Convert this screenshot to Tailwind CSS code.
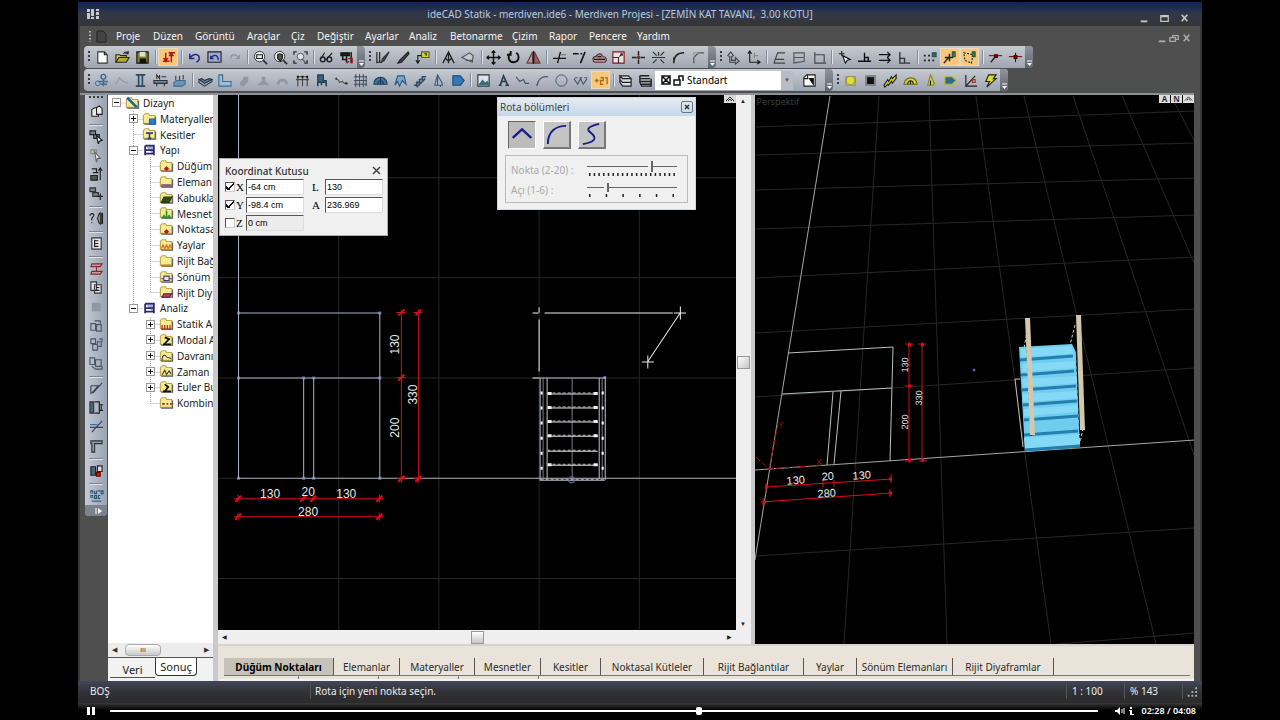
<!DOCTYPE html>
<html lang="tr">
  <head>
    <meta charset="UTF-8" />
    <meta name="viewport" content="width=device-width, initial-scale=1.0" />
    <title>ideCAD Statik - merdiven.ide6</title>
    <script src="https://cdn.jsdelivr.net/npm/@tailwindcss/browser@4"></script>
  </head>
  <body class="bg-black h-screen overflow-hidden flex flex-col px-[78px] text-[11px] leading-4 font-['Noto_Sans',sans-serif]">
    <!-- Title bar -->
    <header class="mt-[2px] h-6 shrink-0 flex items-center pl-2 pr-3 bg-linear-to-b from-[#10205a] via-[#333847] to-[#353535] text-[#b4cbe0]">
      <svg class="w-4 h-4" viewBox="0 0 16 16" fill="#c8c8c8"><path d="M1 3h3v3H1zM1 7h3v6H1zM5 3h3v7H5zM5 11h3v2H5zM10 3h3v2h-3zM10 6h3v3h-3zM10 10h3v3h-3z" /></svg>
      <h1 class="flex-1 text-center whitespace-pre text-[10px]">ideCAD Statik - merdiven.ide6 - Merdiven Projesi - [ZEMİN KAT TAVANI,  3.00 KOTU]</h1>
      <div class="flex gap-2 pt-2 text-[#c4c4c4]" data-tools="winmin winmax winclose"></div>
    </header>

    <div class="flex-1 min-h-0 flex flex-col bg-[#4f4f4f] border-x-2 border-[#3a3a3a]">
      <!-- Menu bar -->
      <nav class="h-5 shrink-0 flex items-center pl-2 pr-2 text-[10px] text-[#f4f4f4]">
        <svg class="w-5 h-4 mr-2" viewBox="0 0 20 16"><path d="M2 3v11" stroke="#ddd" stroke-width="1.5" stroke-dasharray="1.5 2" /><path d="M9 3h6l3 3v8H9z" fill="#444" stroke="#222" /></svg>
        <button class="w-[37px] text-left">Proje</button>
        <button class="w-[42px] text-left">Düzen</button>
        <button class="w-[52px] text-left">Görüntü</button>
        <button class="w-[44px] text-left">Araçlar</button>
        <button class="w-[26px] text-left">Çiz</button>
        <button class="w-[48px] text-left">Değiştir</button>
        <button class="w-[44px] text-left">Ayarlar</button>
        <button class="w-[41px] text-left">Analiz</button>
        <button class="w-[62px] text-left">Betonarme</button>
        <button class="w-[37px] text-left">Çizim</button>
        <button class="w-[40px] text-left">Rapor</button>
        <button class="w-[48px] text-left">Pencere</button>
        <button class="text-left">Yardım</button>
        <div class="ml-auto flex -mb-1 text-[#a8a8a8]" data-tools="winmin winrestore winclose"></div>
      </nav>

      <!-- Toolbars -->
      <div class="h-[22px] shrink-0 flex pl-1">
        <div class="w-[281px] flex items-center rounded-l bg-linear-to-b from-[#c6cad1] to-[#a0a6b1]" data-tools="grip new open save | !levels | undo undobox redo | zoomwin zoompan zoomall | glasses tools end"></div>
        <div class="w-[351px] flex items-center bg-linear-to-b from-[#c6cad1] to-[#a0a6b1]" data-tools="grip knife pen callout | mirrorv eraser | move rotate mirror | trim extend stamp scale cross explode fillet chamfer end"></div>
        <div class="w-[317px] flex items-center rounded-r bg-linear-to-b from-[#c6cad1] to-[#a0a6b1]" data-tools="grip ucs axes | planea planeb planec | snapcur perp parallel ortho | gridsnap !nodesnap !boxsnap | near mid end"></div>
      </div>
      <div class="h-[22px] mt-px shrink-0 flex pl-1">
        <div class="w-[571px] flex items-center rounded-l bg-linear-to-b from-[#c6cad1] to-[#a0a6b1]" data-tools="grip node ghosta column beam load | slab lshape ghostb ghostc ghostd frame chair spring mesh dome curtain stairs bell tag | image text spline arc circle zigzag !numbers | layers layersb"></div>
        <div class="w-[178px] flex items-center bg-linear-to-b from-[#c6cad1] to-[#a0a6b1]">
          <div class="w-[138px] h-[19px] flex items-center bg-white text-black pl-1">
            <svg class="w-7 h-4 shrink-0" viewBox="0 0 28 16" fill="none" stroke="#111" stroke-width="1.5"><path d="M3 4h8v8H3zM4 5l6 6M10 5l-6 6M15 8h6v5h-6zM20 8V4h4v5" /></svg>
            <select aria-label="Katman" class="flex-1 min-w-0 appearance-none bg-transparent text-[10px] h-full"><option>Standart</option></select>
            <span class="w-3 h-full bg-[#b8bcc6] text-[#555] text-[6px] flex items-center justify-center">▼</span>
          </div>
          <div class="flex-1 flex items-center h-full" data-tools="layerpick end"></div>
        </div>
        <div class="w-[175px] flex items-center rounded-r bg-linear-to-b from-[#c6cad1] to-[#a0a6b1]" data-tools="grip circyel dark beamyel arch tri tagb graph bolt end"></div>
      </div>

      <!-- Work area -->
      <main class="relative mt-[2px] flex-1 min-h-0 flex border-t-2 border-[#8d9098] mr-[6px]">
        <div class="w-7 shrink-0 pl-[5px]">
          <div class="w-[22px] flex flex-col items-center rounded-b bg-linear-to-r from-[#c3c9d4] to-[#9aa3b3]" data-tools="gripv copy - sel selb move3 selc - query - listbox - steel paste ghoste rota rotb rotc - slope wall cross2 corner - shapes - auto endv"></div>
        </div>

        <aside class="w-[105px] shrink-0 flex flex-col bg-[#f2f2f2]">
          <div class="flex-1 bg-white overflow-hidden relative">
            <svg class="absolute top-0 left-0 w-[106px] h-[316px]" viewBox="0 0 106 316" fill="none" stroke="#aaa" stroke-dasharray="1 1"><path d="M8.500 8h10M25.500 16v198M25.500 24.500h10M25.500 39.500h10M25.500 55.500h10M25.500 213.500h10M42.500 62v136M42.500 222v87M42.500 71.500h9M42.500 87.500h9M42.500 102.500h9M42.500 118.500h9M42.500 134.500h9M42.500 150.500h9M42.500 166.500h9M42.500 182.500h9M42.500 197.500h9M42.500 229.500h9M42.500 245.500h9M42.500 261.500h9M42.500 277.500h9M42.500 292.500h9M42.500 308.500h9" /></svg>
            <ul id="tree" class="relative h-[316px] grid auto-rows-fr text-[10px] text-[#222] whitespace-nowrap"></ul>
          </div>
          <div class="h-[14px] flex items-center bg-[#ececec] text-[7px] text-[#333] px-1">
            <button>◀</button>
            <button class="ml-2 w-9 h-3 border border-[#aaa] rounded-sm bg-linear-to-b from-white to-[#c9c9c9] leading-2">ııı</button>
            <button class="ml-auto">▶</button>
          </div>
          <div class="h-6 flex items-start border-t border-[#555] text-[11px] text-[#222] pl-[2px]">
            <button class="w-[45px] h-5 pt-1 border-b border-[#555]">Veri</button>
            <button class="w-[42px] h-[18px] border border-t-0 border-[#333] bg-white rounded-b-sm">Sonuç</button>
          </div>
        </aside>

        <section class="flex-1 min-w-0 flex flex-col border-l-5 border-[#c9c9cb]">
          <div class="flex-1 min-h-0 grid grid-cols-[536fr_439fr] bg-[#c9c9cb]">
            <!-- Plan view -->
            <div class="grid grid-cols-[1fr_15px] grid-rows-[1fr_14px] bg-[#efefef] mr-1 min-h-0">
              <div class="relative bg-black min-h-0 overflow-hidden">
                <svg class="w-full h-full block" viewBox="218 96 518 534" preserveAspectRatio="xMinYMin slice" fill="none">
                  <path stroke="#262626" d="M338.500 95v534M438.500 95v534M538.500 95v534M638.500 95v534M218 178.500h518M218 278.500h518M218 378.500h518M218 578.500h518M218 478.500h20" />
                  <path stroke="#a9b6bf" d="M238.500 95v384M238 313.500h141M238 378.500h141M379.500 313v166M303.500 378v100M313.500 378v100M238 478.500h498" />
                  <path stroke="#8f9de0" stroke-width="3" stroke-linecap="square" d="M238.500 313.500h0M379.500 313.500h0M238.500 378.500h0M379.500 378.500h0M303.500 378.500h0M313.500 378.500h0M238.500 478.500h0M303.500 478.500h0M313.500 478.500h0M379.500 478.500h0" stroke-opacity=".7" />
                  <g stroke="#d80f1a">
                    <path d="M401 310v173M418 310v173M234 499h149M234 517h149M396 313h9M396 378h9M396 479h9M413 313h9M413 479h9M238 495v8M303 496v6M313 496v6M379 495v8M238 513v8M379 513v8" />
                    <path stroke-width="2" d="M398 316l6-6M398 381l6-6M398 482l6-6M415 316l6-6M415 482l6-6M235 502l6-6M300 502l6-6M310 502l6-6M376 502l6-6M235 520l6-6M376 520l6-6" />
                  </g>
                  <g class="font-['Liberation_Sans',sans-serif] text-[12px]" fill="#e8e8e8" text-anchor="middle">
                    <text x="270" y="498">130</text><text x="308" y="496">20</text><text x="346" y="498">130</text><text x="308" y="516">280</text>
                    <text transform="translate(399 345) rotate(-90)">130</text><text transform="translate(399 428) rotate(-90)">200</text><text transform="translate(417 395) rotate(-90)">330</text>
                  </g>
                  <path stroke="#eee" d="M538.500 320v52M544 313.500h128M679 314l-32 48M532 313.500h6M538.500 308v5M532 378.500h7M673 313.500h12M679.500 307v13M641 362.500h12M647 356v13" />
                  <path stroke="#b9c0cc" d="M539.500 378v102M546.500 378v101M598.500 378v101M604.500 378v102M539 378.500h65M539 480.500h65" />
                  <path stroke="#777b85" d="M571.500 378v102M601.500 378v101M542.500 378v101" />
                  <path stroke="#fff" stroke-width="2" stroke-dasharray="3 12" d="M541 392v88M602 392v88" />
                  <path stroke="#ddd" d="M547 394.500h50M547 408.500h50M547 422.500h50M547 436.500h50M547 451.500h50M547 465.500h50" />
                  <path stroke="#bbb" stroke-dasharray="3 2" d="M547 393.500h50M547 407.500h50M547 421.500h50M547 435.500h50M547 450.500h50M547 464.500h50M540 479.500h64" />
                  <path stroke="#eee" stroke-width="3" d="M547 394h4M547 408h4M547 422h4M547 436h4M547 465h4M593 394h4M593 408h4M593 422h4M593 436h4M593 465h4" />
                  <circle cx="571" cy="480" r="3" stroke="#666b9a" />
                  <circle cx="604" cy="378" r="1.500" fill="#8f9de0" />
                </svg>
                <button class="absolute top-0 right-0 w-3 h-2 bg-[#d8d8d8]" aria-label="Büyüt"><svg viewBox="0 0 12 8"><path d="M2 6l4-4 4 4M4 6l2-2 2 2" stroke="#333" fill="none" /></svg></button>
              </div>
              <div class="flex flex-col items-center text-[6px] text-[#222]">
                <button class="leading-3">▲</button>
                <button class="mt-[249px] w-[13px] h-[13px] border border-[#999] bg-linear-to-br from-white to-[#c6c6c6]" aria-label="Dikey kaydır"></button>
                <button class="mt-auto leading-3">▼</button>
              </div>
              <div class="flex items-center text-[6px] text-[#222] px-1">
                <button>◀</button>
                <button class="ml-[244px] w-[13px] h-[13px] border border-[#999] bg-linear-to-b from-white to-[#c6c6c6]" aria-label="Yatay kaydır"></button>
                <button class="ml-auto">▶</button>
              </div>
            </div>
            <!-- Perspective view -->
            <div class="relative bg-black min-h-0 overflow-hidden">
              <svg class="w-full h-full block" viewBox="755 95 440 549" preserveAspectRatio="xMinYMin slice" fill="none">
                <path stroke="#262626" d="M879 96L844 644M929 96L947 644M976 96L1051 644M1024 96L1156 644M1073 96L1194 455M1122 96L1194 263M1171 96L1194 140M756 333L1195 309M756 397L1195 368M756 556L1195 528M1057 644L1195 633M756 278L1195 257M756 229L1195 215M756 190L1195 178M756 155L1195 143M756 127L1195 111" />
                <path stroke="#a5a5a5" d="M830 96L755 560M755 470L1195 440" />
                <path stroke="#b5c2bd" d="M788 353L893 347L890 461M782 394L892 388M833 392L827 465M841 391L834 464M1020 379h-5l8 68" />
                <path stroke="#a01018" d="M756 457L770 470M768 469l55-4M769 469l9-45" stroke-dasharray="6 2" />
                <path stroke="#d80f1a" d="M909 342v121M922 342v120M766 487L892 479M761 502L892 493M905 344h8M905 386h8M905 461h8M918 344h8M919 461h8M766 483v8M823 480v7M834 480v7M891 474v9M763 498v8M890 489v8" />
                <path stroke="#d80f1a" stroke-width="3" d="M908 345h3M908 386h3M908 460h3M921 345h3M921 460h3M765 487h3M889 479h3M763 502h3M889 493h3" />
                <g class="font-['Liberation_Sans',sans-serif] text-[11px]" fill="#e8e8e8" text-anchor="middle">
                  <text transform="translate(796 484) rotate(-4)">130</text><text transform="translate(828 480) rotate(-4)">20</text><text transform="translate(862 479) rotate(-4)">130</text><text transform="translate(827 497) rotate(-4)">280</text>
                </g>
                <g class="font-['Liberation_Sans',sans-serif] text-[9px]" fill="#e8e8e8" text-anchor="middle">
                  <text transform="translate(908 365) rotate(-88)">130</text><text transform="translate(908 422) rotate(-88)">200</text><text transform="translate(922 398) rotate(-88)">330</text>
                </g>
                <g class="font-['Liberation_Sans',sans-serif] text-[9px]" fill="#8c1018"><text x="816" y="465">X</text><text x="778" y="428">Y</text></g>
                <circle cx="974" cy="370" r="1.500" fill="#4a5fc0" />
                <!-- Staircase -->
                <path stroke="#d8cdb4" stroke-dasharray="3 2" d="M1028 325l-4 24M1075 325l-5 20M1083 428l-3 15" />
                <path fill="#6fcdf0" d="M1019 347L1072 344L1076 352L1080 447L1025 452z" />
                <path fill="#84d9f6" d="M1021 349L1071 346L1074 354L1021 357zM1022 364L1075 361V368L1022 372zM1023 379L1077 376V383L1023 387zM1023 394L1077 391V398L1023 402zM1024 409L1078 405V412L1024 416zM1024 438L1080 434V444L1025 449z" />
                <path stroke="#247fae" stroke-width="3" d="M1020 360L1073 356M1021 375L1074 371M1022 390L1076 386M1023 405L1077 401M1024 420L1078 416M1024 435L1078 431M1025 450L1080 446" />
                <path stroke="#111" stroke-dasharray="3 3" d="M1027 350L1031 436M1076 345L1080 440" />
                <path fill="#d3c7ad" d="M1025 318h5l5 117h-5zM1076 315h5l4 115h-5z" />
              </svg>
              <span class="absolute top-px left-[2px] text-[9px] leading-3 text-[#3c3c3c]">Perspektif</span>
              <div class="absolute top-0 right-0 flex gap-px text-[8px] leading-2 font-bold text-[#333]">
                <button class="w-[11px] h-2 bg-[#dedede]">A</button><button class="w-[11px] h-2 bg-[#dedede]">N</button>
                <button class="w-[11px] h-2 bg-[#dedede]" aria-label="Büyüt"><svg viewBox="0 0 12 8"><path d="M2 6l4-4 4 4M4 6l2-2 2 2" stroke="#333" fill="none" /></svg></button>
              </div>
            </div>
          </div>
          <!-- Element tabs -->
          <div class="h-[37px] shrink-0 bg-[#e9e3da] border-t-2 border-[#d6d3cf] flex flex-col pt-3">
            <div class="flex h-[18px] ml-[6px] mr-1 border-b border-[#777] text-[10px] text-[#2c2c2c] whitespace-nowrap">
              <button class="w-[110px] bg-[#c5c2b7] border-r border-[#555] font-bold text-black">Düğüm Noktaları</button>
              <button class="w-[66px] border-r border-[#555]">Elemanlar</button>
              <button class="w-[75px] border-r border-[#555]">Materyaller</button>
              <button class="w-[66px] border-r border-[#555]">Mesnetler</button>
              <button class="w-[60px] border-r border-[#555]">Kesitler</button>
              <button class="w-[103px] border-r border-[#555]">Noktasal Kütleler</button>
              <button class="w-[100px] border-r border-[#555]">Rijit Bağlantılar</button>
              <button class="w-[53px] border-r border-[#555]">Yaylar</button>
              <button class="w-[96px] border-r border-[#555]">Sönüm Elemanları</button>
              <button class="w-[101px] border-r border-[#555]">Rijit Diyaframlar</button>
            </div>
            <div class="flex-1 flex ml-[1px] border-b-2 border-[#f4f2ee]">
              <span class="w-20 border-r border-[#777]"></span><span class="w-20 border-r border-[#777]"></span><span class="w-20 border-r border-[#777]"></span><span class="w-20 border-r border-[#777]"></span>
            </div>
          </div>
        </section>

        <!-- Coordinate box -->
        <div class="absolute left-[139px] top-[63px] w-[169px] h-[78px] bg-[#f0f0f0] border border-[#aaa] pl-[5px] pr-1 text-black">
          <div class="flex items-center justify-between h-[19px] pt-1 text-[10px] font-medium text-[#333]">
            <h2>Koordinat Kutusu</h2>
            <button aria-label="Kapat"><svg class="w-3 h-3" viewBox="0 0 12 12"><path d="M2 2l7 7M9 2l-7 7" stroke="#444" stroke-width="1.500" /></svg></button>
          </div>
          <div id="coords" class="grid grid-cols-[11px_10px_58px_21px_58px] items-center auto-rows-[18px] font-['Liberation_Serif',serif] text-[11px]"></div>
        </div>

        <!-- Route sections -->
        <div class="absolute left-[417px] top-[2px] w-[199px] h-[113px] bg-[#f0f0f0] border border-[#d0d6dd]">
          <div class="flex items-center justify-between h-[18px] px-[2px] bg-linear-to-b from-[#e6ebf1] to-[#c5d8ea] text-[10px] text-[#444]">
            <h2>Rota bölümleri</h2>
            <button aria-label="Kapat" class="w-3 h-3 border border-[#66748c] rounded-xs"><svg viewBox="0 0 10 10"><path d="M3 3l4 4M7 3l-4 4" stroke="#333" stroke-width="1.500" /></svg></button>
          </div>
          <div class="flex gap-[7px] pl-[10px] pt-[5px]">
            <button class="w-7 h-7 bg-[#bcbcbc] border border-t-[#666] border-l-[#666] border-white" aria-label="Doğru"><svg viewBox="0 0 28 28"><path d="M4 17l10-9 10 9" stroke="#1a1a8c" stroke-width="2.500" fill="none" /></svg></button>
            <button class="w-7 h-7 bg-[#c4c4c4] border border-b-2 border-r-2 border-t-white border-l-white border-[#777]" aria-label="Yay"><svg viewBox="0 0 26 26"><path d="M4 23C4 10 12 4 23 4" stroke="#1a1a8c" stroke-width="2" fill="none" /></svg></button>
            <button class="w-7 h-7 bg-[#c4c4c4] border border-b-2 border-r-2 border-t-white border-l-white border-[#777]" aria-label="Eğri"><svg viewBox="0 0 26 26"><path d="M21 2C8 5 8 8 12 11C20 17 16 21 4 23" stroke="#1a1a8c" stroke-width="2" fill="none" /></svg></button>
          </div>
          <div class="mt-[6px] mx-[7px] h-12 border border-[#bbb] pl-[5px] pr-[10px] text-[10px] text-[#a8a8a8]">
            <div class="flex justify-between h-[21px] pt-1">
              <label for="pts" class="pt-[2px]">Nokta (2-20) :</label>
              <div class="w-[90px] flex flex-col">
                <input id="pts" type="range" min="2" max="20" value="15" class="w-full h-[13px] appearance-none bg-transparent [&::-webkit-slider-runnable-track]:h-px [&::-webkit-slider-runnable-track]:bg-[#666] [&::-webkit-slider-thumb]:appearance-none [&::-webkit-slider-thumb]:w-[5px] [&::-webkit-slider-thumb]:h-[11px] [&::-webkit-slider-thumb]:-mt-[5px] [&::-webkit-slider-thumb]:bg-[#f0f0f0] [&::-webkit-slider-thumb]:border-r-2 [&::-webkit-slider-thumb]:border-[#666]" />
                <svg class="w-[90px] h-[3px]" viewBox="0 0 90 3"><path d="M2 1.500h88" stroke="#222" stroke-width="3" stroke-dasharray="1.500 3.190" /></svg>
              </div>
            </div>
            <div class="flex justify-between h-[21px] pt-1">
              <label for="ang" class="pt-px">Açı (1-6) :</label>
              <div class="w-[90px] flex flex-col">
                <input id="ang" type="range" min="1" max="6" value="2" class="w-full h-[13px] appearance-none bg-transparent [&::-webkit-slider-runnable-track]:h-px [&::-webkit-slider-runnable-track]:bg-[#666] [&::-webkit-slider-thumb]:appearance-none [&::-webkit-slider-thumb]:w-[5px] [&::-webkit-slider-thumb]:h-[9px] [&::-webkit-slider-thumb]:-mt-[4px] [&::-webkit-slider-thumb]:bg-[#f0f0f0] [&::-webkit-slider-thumb]:border-r-2 [&::-webkit-slider-thumb]:border-[#666]" />
                <svg class="w-[90px] h-[3px]" viewBox="0 0 90 3"><path d="M2 1.500h88" stroke="#222" stroke-width="3" stroke-dasharray="1.500 15.200" /></svg>
              </div>
            </div>
          </div>
        </div>
      </main>
    </div>

    <!-- Status bar -->
    <footer class="h-[22px] shrink-0 flex items-center pl-3 pr-1 pb-[2px] bg-linear-to-b from-[#41465a] via-[#323237] to-[#2b2b2b] text-[10px] text-[#ececec]">
      <span class="w-[220px]">BOŞ</span>
      <span class="flex-1 border-l border-[#555] pl-1">Rota için yeni nokta seçin.</span>
      <span class="w-[58px] border-l border-[#555] pl-[5px]">1 : 100</span>
      <span class="w-[58px] border-l border-[#555] pl-[5px]">% 143</span>
      <svg class="w-4 h-4 border-l border-[#555]" viewBox="0 0 16 16" fill="#aaa"><path d="M13 4h2v2h-2zM9 8h2v2H9zM13 8h2v2h-2zM5 12h2v2H5zM9 12h2v2H9zM13 12h2v2h-2z" /></svg>
    </footer>

    <!-- Player -->
    <div class="h-[17px] shrink-0 flex items-center pl-2 pr-[6px] pb-px bg-linear-to-b from-[#3a3a3a] to-black to-60% text-white text-[9px] font-semibold">
      <button aria-label="Duraklat" class="w-6"><svg class="w-[10px] h-2" viewBox="0 0 10 8" fill="#fff"><path d="M1 0h3v8H1zM6 0h3v8H6z" /></svg></button>
      <input aria-label="Konum" type="range" min="0" max="248" value="148" class="flex-1 min-w-0 h-3 appearance-none bg-transparent [&::-webkit-slider-runnable-track]:h-[2px] [&::-webkit-slider-runnable-track]:bg-white [&::-webkit-slider-thumb]:appearance-none [&::-webkit-slider-thumb]:w-[6px] [&::-webkit-slider-thumb]:h-2 [&::-webkit-slider-thumb]:-mt-[3px] [&::-webkit-slider-thumb]:rounded-xs [&::-webkit-slider-thumb]:bg-white" />
      <button aria-label="Ses" class="ml-4"><svg class="w-3 h-3" viewBox="0 0 12 12"><path d="M1 5h2l3-3v8L3 7H1z" fill="#fff" /><path d="M8 4v4M10 3v6" stroke="#fff" /></svg></button>
      <button aria-label="Bilgi" class="w-4"><svg class="w-3 h-3" viewBox="0 0 12 12" fill="#fff"><path d="M4 2h2v2H4zM3 5h3v4h2v1H4V6H3z" /></svg></button>
      <span class="whitespace-nowrap">02:28 / 04:08</span>
    </div>

    <script>
      // Stroke icons on a 16x16 grid
      const K = '#1c1c1c'
      const B = '#3d6f96'
      const p = (d, s = K, f = 'none', w = 1.2) => `<path d="${d}" stroke="${s}" fill="${f}" stroke-width="${w}"/>`
      const ghost = d => p(d, 'none', '#9298a3')
      const icons = {
        new: p('M3 2h7l3 3v9H3z', '#333', '#fff') + p('M10 2v3h3'),
        open: p('M1 13V5h4l1 1h6v2', '#222', '#d6cf4a') + p('M1 13l3-5h11l-3 5z', '#222', '#b4ac2c') + p('M9 4c2-3 4-2 5 0M14 1v3h-3'),
        save: p('M2 2h12v12H2z', '#111', '#7f8427') + p('M5 2h6v5H5z', 'none', '#ddd') + p('M5 9h7v5H5z', 'none', '#111'),
        levels: p('M5 3v10M11 3v10M2 12h7M8 3h7', '#b5131b', 'none', 1.5) + p('M3 9l2 3 2-3zM9 6l2-3 2 3z', '#b5131b', '#b5131b'),
        undo: p('M3 4v5h5M3 9c4-6 10-5 10 0 0 2-1 3-3 4', '#232a8c', 'none', 1.6),
        undobox: p('M1 2h14v11H1z', '#222', '#9eabc9') + p('M4 6v3h3M4 9c3-5 8-4 8 2', '#232a8c', 'none', 1.5),
        redo: p('M13 5v4H9M13 9c-3-5-9-5-9 0', '#8d929e'),
        zoomwin: '<circle cx="7" cy="7" r="5.500" fill="#e8edf2" stroke="#333"/>' + p('M4 5h6v4H4z') + p('M11 11l4 4', '#333', 'none', 2),
        zoompan: '<circle cx="7" cy="7" r="5.500" fill="#e8edf2" stroke="#333"/>' + p('M5 9V5l2-1 3 1v4l-2 3z', K, '#555') + p('M11 11l4 4', '#333', 'none', 2),
        zoomall: p('M1 5V2h3M12 2h3v3M1 11v3h3M12 14h3v-3', '#333', 'none', 1.5) + '<circle cx="8" cy="7" r="3.500" fill="#dfe5ea" stroke="#555"/>' + p('M10 10l3 3', '#555'),
        glasses: '<circle cx="4" cy="10" r="2.500" fill="none" stroke="#222" stroke-width="1.500"/><circle cx="11" cy="10" r="2.500" fill="none" stroke="#222" stroke-width="1.500"/>' + p('M2 9l4-6M9 9l5-6M6 10h3'),
        tools: p('M2 3h9v3H2z', '#111', '#222') + p('M4 6v5M8 6v7M13 2v12M3 10h6', K, 'none', 1.6) + p('M10 9h4v5M11 12l-3 2', '#a11', 'none', 1.5),
        knife: p('M2 2v12M5 2v11M2 13h5') + p('M15 2l-5 9-3 2 1-4z', '#333', '#444'),
        pen: p('M14 2l-9 9-2 3 4-1 8-9z', '#222', '#444'),
        callout: p('M7 2h8v6H7z', '#55601c', '#d4d22e') + p('M7 6H3v7M1 11l2 3 2-3M10 4h2v2'),
        mirrorv: p('M2 14L8 2l6 12M5 9l3 3 3-3M8 3v11', '#222', 'none', 1.4),
        eraser: p('M1 8l8-5 4 3-1 7zM5 11h7', '#555', '#c4c8cf'),
        move: p('M8 1v14M1 8h14M6 3l2-2 2 2M6 13l2 2 2-2M3 6L1 8l2 2M13 6l2 2-2 2', '#111', 'none', 1.5),
        rotate: p('M5 3c-4 4-2 10 3 10 6 0 7-7 3-10M5 1v4H1', '#111', 'none', 2),
        mirror: p('M7 2v12H1z', '#644', '#b99') + p('M9 2v12h6z', '#644', '#a55') + p('M8 1v14'),
        trim: p('M1 9h14M9 2L6 14', '#111', 'none', 1.4) + p('M9 5h6', '#777'),
        extend: p('M1 4h6M9 4h2M14 2L9 14', '#111', 'none', 1.6),
        stamp: p('M1 9c1-3 3-1 4-3s5-3 6 0 3 0 4 3-1 4-2 4H3c-1 0-2-1-2-4z', '#533', '#b98e90') + p('M2 10h12M6 7h4'),
        scale: p('M2 2h12v12H2z', '#7c1a20', '#f1dfdd') + p('M2 8h6v6', '#333') + p('M9 7l3-3M10 4h2v2'),
        cross: p('M8 1v5M8 10v5M1 8h5M10 8h5', '#222', 'none', 1.5) + p('M7 7h2v2H7z', '#833', '#833'),
        explode: p('M2 2l4 4M10 10l4 4M14 2l-4 4M6 10l-4 4M8 2v4M1 8h14', '#333', 'none', 1.3),
        fillet: p('M3 14C3 7 6 3 14 3M3 14V8', '#222', 'none', 1.5),
        chamfer: p('M3 14V8l5-5h6', '#555', 'none', 1.3) + p('M3 8V3h5', '#999'),
        ucs: p('M2 6l3-4 3 4-2 1v4h4V8l4 4-4 3v-2H4V7z', '#444'),
        axes: p('M4 2v11h11M2 4l2-3 2 3M12 11l3 2-3 2') + p('M8 6h5M9 3v6', '#8a8a8a'),
        planea: p('M2 14h12M2 14l4-11h8M4 10h9', '#444'),
        planeb: p('M2 3v11l11-2V3zM2 8h11', '#555'),
        planec: p('M3 2v12h12M3 5h10v8', '#444'),
        snapcur: p('M5 1v5M2 4h6') + p('M6 6l8 4-3 1-2 3z', '#111', '#fff'),
        perp: p('M1 12h14M8 3v9M8 8h4v4', '#111', 'none', 1.5),
        parallel: p('M2 5h12M11 2l3 3-3 3M2 11h12M11 8l3 3-3 3', '#111', 'none', 1.3),
        ortho: p('M3 2v12h11M3 9h5v5', '#333', 'none', 1.4),
        gridsnap: p('M2 6h11M2 11h11', '#222', 'none', 2).replace('/>', ' stroke-dasharray="2 2.500"/>') + p('M11 3h4v4h-4z', '#256', '#37685d'),
        nodesnap: p('M2 14L8 7M3 8h9M8 4v8', '#222', 'none', 1.5) + p('M11 2h3v5h-3z', '#285c3a', '#49783f'),
        boxsnap: p('M2 3l10 2-2 9-7-3z', '#222', 'none').replace('/>', ' stroke-dasharray="2 1.500"/>') + p('M11 2h3v5h-3z', '#285c3a', '#49783f'),
        near: p('M1 6h14', '#7a1a1f') + p('M3 13l5-6', '#222', 'none', 1.5) + p('M7 5h3v3H7z', '#500', '#900'),
        mid: p('M1 7h14', '#7a1a1f') + p('M8 3v10', '#222') + p('M6.500 6h3v3h-3z', '#500', '#900'),
        node: '<circle cx="10" cy="4" r="2.500" fill="none" stroke="#2f6a9a" stroke-width="1.500"/>' + p('M10 7v7M5 9h10M7 12h7', B, 'none', 1.5) + '<circle cx="4" cy="11" r="2.500" fill="none" stroke="#2f6a9a"/>',
        ghosta: p('M2 12l4-7 4 4 5 2', '#9298a3'),
        column: p('M3 2h10M3 14h10M6 2v12M10 2v12', '#2a4a66', 'none', 1.8),
        beam: p('M1 8h14v3H1zM4 11v3M12 11v3', '#333', '#6b8aa5') + p('M4 6V2l3 4V2M9 4h5', '#333'),
        load: p('M2 10l3-2h9v4l-3 2H2z', B, '#6c93b5') + p('M4 3v5M8 3v5M12 2v5', '#444'),
        slab: p('M1 7l6 4 8-4-3-1-5 2-3-2z', '#234', '#5f93b5') + p('M1 8v2l6 4 8-5V8', '#234'),
        lshape: p('M2 2h4v7h9v5H2z', '#3f6e91', '#9dbcd5'),
        ghostb: ghost('M3 13c0-6 3-3 4-9h5v5l-5 5z'), ghostc: ghost('M2 12l4-3V4h4v5l4 3v1H2z'), ghostd: ghost('M2 12c0-8 12-8 12 0h-3c0-4-6-4-6 0z'),
        frame: p('M3 14V4h10v10M8 4v10M1 7h14', '#444') + p('M2 4h2M7 4h2M12 4h2', '#111', 'none', 2),
        chair: p('M4 2h6v6h3v2H4z', '#1d3a52', '#366282') + p('M4 10v4M13 10v4M8 10v3', '#1d3a52', 'none', 1.6),
        spring: p('M1 6l3 1 2 3 3-1 2 2h4', '#555') + p('M2 6h1M12 11h2', '#333', 'none', 2.5),
        mesh: p('M3 1v14M7 1v14M11 1v14M14 3v11M1 4h14M1 8h14M1 12h14', '#37495a', 'none', 1),
        dome: p('M1 12c0-10 14-10 14 0z', '#1d3f5c', '#3f749c') + p('M5 12c0-5 6-5 6 0M8 5v7', '#1d3f5c'),
        curtain: p('M3 13L6 3h7l2 9-4-4-3 6-2-5z', '#2c5d86', '#7aa7ca'),
        stairs: p('M2 13h3v-3h3V7h3V4h4M5 15l9-9', '#2a4b66', 'none', 1.7),
        bell: p('M4 13L7 2l5 9v2zM7 2v11M10 13v2', '#3b5a75', '#a8bccd'),
        tag: p('M2 3h8l4 5-4 5H2z', '#1a4a78', '#2f7bb8'),
        image: p('M2 2h12v12H2z', '#333', '#d9e6ee') + p('M3 12l4-5 3 3 2-2 2 3v2H3z', 'none', '#3c6a7d'),
        text: p('M3 13h3M10 13h4M4.500 13L8 3l4.500 10M6 9h5', '#2a3a48', 'none', 1.7),
        spline: p('M1 4l4 5 4-2 2 4h4', '#40566a'),
        arc: p('M2 14C3 7 7 3 14 4', '#40566a'),
        circle: '<circle cx="8" cy="8" r="6" fill="none" stroke="#40566a"/>',
        zigzag: p('M1 6l4 6 3-6 3 6 4-6M2 5h3M7 5h3M12 5h3', '#40566a'),
        numbers: p('M2 8h4M4 6v4M8 5h3v3H8v4h3M13 5h2v7', '#b06a12', 'none', 1.4),
        layers: p('M2 3h9l3 3H5zM2 7l3 3h9V6M2 10l3 4h9v-4M2 3v7', '#222', '#d5dbe0'),
        layersb: p('M2 3h10M2 6h11M2 9h12M4 12h10M2 3v7l2 4h10V6', '#222', 'none', 1.5),
        layerpick: p('M2 5l3-3h9v12H2z', '#222', '#fff') + p('M8 6l4 6V6z', '#111', '#111') + p('M2 6h4V2'),
        circyel: p('M3 4h10v9H3z', '#888', '#b9bcb4') + '<circle cx="8" cy="8" r="4.500" fill="#e3e02c" stroke="#99941c"/>',
        dark: p('M3 3h10v10H3z', '#777', '#888') + p('M5 5h6v6H5z', '#111', '#111'),
        beamyel: p('M1 13l4-6 1 2 3-5 1 2 4-4v4l-4 5-1-2-3 4-1-1-3 3z', '#222', '#cfcb25'),
        arch: p('M1 12h14c-1-9-12-9-14 0z', '#6d6a15', '#d9d52d') + p('M5 12c0-5 6-5 6 0M8 8v4'),
        tri: p('M5 13L8 2l4 9-1 2z', '#8d8620', '#d7cf33') + p('M8 8v5'),
        tagb: p('M2 4h8l4 4-4 4H2z', '#c1b53a', '#2b6b96'),
        graph: p('M3 2v12h12M3 14L13 3', '#222') + p('M10 7h3v3h-3z', '#a33'),
        bolt: p('M6 2h8l-3 4h3L4 15l3-6H3z', '#222', '#dfdb2a'),
        copy: p('M3 6l3-2h4v9H3z', '#222', '#eee') + p('M8 4l3-2 3 3v6H8z', '#222', '#eee'),
        sel: p('M1 2h6v4H1zM5 6h6v4H5z', '#222', '#7b8390') + p('M8 7l6 5-3 1-1 3z', '#111', '#fff'),
        selb: p('M2 2h6v4H2z', '#888') + p('M6 4l6 7-3 0-1 4z', '#666', '#fff'),
        move3: p('M2 9h7v5H2zM4 6h6', '#222', '#555') + p('M12 2v12M10 4l2-3 2 3M3 2h5v4'),
        selc: p('M1 2h6v4H1zM4 7h6v4H4z', '#333', '#7b8390') + p('M12 8v7M9 11h6'),
        query: p('M1 5c0-3 5-3 4 0L3 8v2M3 12v1') + p('M12 2c-3 1-1 4-3 6 2 2 0 5 3 6z', '#222', '#c9c6a0') + p('M14 2v12', '#222', 'none', 2),
        listbox: p('M3 2h10v12H3z', '#333', '#e8e8e8') + p('M6 4v8M6 5h4M6 8h4M6 11h4'),
        steel: p('M3 3h11l-2 3H2zM3 11h11l-2 3H2z', '#8c2730', '#c4a0a5') + p('M8 6v5', '#8c2730'),
        paste: p('M2 2h6v9H2zM6 5h7v9H6z', '#333', '#dde1e6') + p('M8 8h3M8 11h3'),
        ghoste: ghost('M3 4h9l1 2v7H3z'),
        rota: p('M2 6h5v7H2zM8 7h5v7H8zM6 3h6v3', '#46566a'), rotb: p('M2 2h5v5H2zM4 8h5v6H4zM9 5h4v5H9zM11 2h3v3', '#46566a'), rotc: p('M1 2h5v7H1zM7 4h6v7H7zM3 11l4 3h7v-3', '#46566a'),
        slope: p('M2 5h8L3 13M2 5v9M14 2L4 13', '#394656'),
        wall: p('M1 2h4v12H1z', '#333', '#4a6379') + p('M6 2h5v12H6M11 5h4M11 11h4M13 5v6'),
        cross2: p('M1 9h14M14 2L3 14', '#394656', 'none', 1.3) + p('M1 6h8', '#2d6aa3'),
        corner: p('M2 3h12v3H6v9H3V6H2z', '#333', '#8b98a8'),
        shapes: p('M2 4h5v9H2z', '#222', '#4c6478') + p('M9 3h5v6H9z', '#222', '#d8d8d8') + p('M8 10h4v4H8z', '#700', '#b22'),
        auto: p('M2 6V3h2v3M6 3v3h2V3M9 3h3M13 3h2v3h-2zM2 11V8h2v3M6 8h2v3H6zM12 8h-2v3h2', '#2e5877', 'none', 1.2) + p('M3 14h10', '#2e5877'),
        winmin: p('M4 11h7', 'currentColor', 'none', 2),
        winmax: p('M4 5h8v6H4zM4 6h8', 'currentColor', 'none', 1.3),
        winrestore: p('M3 7h6v4H3zM6 7V5h6v4H9', 'currentColor', 'none', 1.3),
        winclose: p('M5 4l6 7M11 4l-6 7', 'currentColor', 'none', 1.8),
      }
      const svg = (body, cls = 'w-4 h-4') => `<svg class="${cls}" viewBox="0 0 16 16">${body}</svg>`

      const special = {
        '|': '<span class="w-[6px] shrink-0 flex justify-center"><i class="w-px h-[14px] bg-[#858b97] shadow-[1px_0_0_#dfe2e8]"></i></span>',
        '-': '<span class="h-[6px] shrink-0 flex items-center"><i class="w-[14px] h-px bg-[#7e8694] shadow-[0_1px_0_#dfe2e8]"></i></span>',
        grip: '<svg class="w-2 h-4 shrink-0" viewBox="0 0 8 16"><path d="M5 2v12" stroke="#3b3b3b" stroke-width="2" stroke-dasharray="2 2"/></svg>',
        gripv: '<svg class="w-4 h-[7px] shrink-0" viewBox="0 0 16 7"><path d="M1 2h14" stroke="#3b3b3b" stroke-width="2" stroke-dasharray="2 2"/></svg>',
        end: '<span class="w-2 self-stretch shrink-0 rounded-r bg-linear-to-b from-[#8f949e] to-[#60646d] flex items-end justify-center"><svg class="w-2 h-2" viewBox="0 0 8 8"><path d="M2 1h5" stroke="#fff"/><path d="M2 3h5L4.500 6z" fill="#fff"/></svg></span>',
        endv: '<span class="h-[11px] w-full rounded-b bg-[#7c828e] flex justify-end items-center"><svg class="w-2 h-2 mr-1" viewBox="0 0 8 8"><path d="M1 1v6" stroke="#fff"/><path d="M3 1v6l4-3z" fill="#fff"/></svg></span>',
      }

      document.querySelectorAll('[data-tools]').forEach(bar => {
        const vertical = bar.dataset.tools.startsWith('gripv')
        bar.innerHTML = bar.dataset.tools
          .split(' ')
          .map(name => {
            if (special[name]) return special[name]
            const on = name[0] === '!'
            const id = on ? name.slice(1) : name
            const base = vertical
              ? 'h-[19px] shrink-0 flex items-center justify-center'
              : id.startsWith('win')
                ? 'w-3 flex items-center justify-center'
                : 'flex-1 min-w-0 h-[18px] flex items-center justify-center'
            return `<button aria-label="${id}" class="${base} ${on ? 'bg-[#f6c77c] outline-1 outline-[#e8dcc0] -outline-offset-1' : ''}">${svg(icons[id], 'w-[15px] h-[15px] shrink-0')}</button>`
          })
          .join('')
      })

      // Tree: [depth, expander, label, drawing on the folder]
      const red = p('M8 8l3 3-3 3-3-3z', 'none', '#c01818')
      const rows = [
        [0, '-', 'Dizayn', p('M2 2l11 11', '#1766a8', 'none', 3)],
        [1, '+', 'Materyaller', p('M8 8h6v6H8z', '#1a5fc0', '#2d7be0')],
        [1, '', 'Kesitler', p('M4 7h8M8 7v6M6 13h4', '#3a3a9a', 'none', 1.8)],
        [1, '-', 'Yapı', 'frame'],
        [2, '', 'Düğüm', red],
        [2, '', 'Eleman', p('M2 12h12', '#8a5a7a', 'none', 3)],
        [2, '', 'Kabukla', p('M2 13l3-6h9l-3 6z', '#243a12', '#2e4a16')],
        [2, '', 'Mesnet', p('M8 5v8M3 13h10M5 10v3M11 10v3', '#2f8a20', 'none', 1.8)],
        [2, '', 'Noktasa', red],
        [2, '', 'Yaylar', p('M2 12l2-4 2 4 2-4 2 4 2-4 2 4', '#e0701c', 'none', 1.6)],
        [2, '', 'Rijit Bağ', p('M2 13h12', '#d0801c', 'none', 2)],
        [2, '', 'Sönüm', p('M2 10h3M11 10h3M5 7h6v5H5z', '#3a3a8a')],
        [2, '', 'Rijit Diy', p('M5 10h9l-3 4H3z', '#6a1040', '#a84a78')],
        [1, '-', 'Analiz', 'frame'],
        [2, '+', 'Statik A', p('M3 9v5M6 9v5M9 9v5M12 9v5M2 14h12', '#c8281c', 'none', 1.4)],
        [2, '+', 'Modal A', p('M6 5l5 2-5 5M4 13h9', '#111', 'none', 2)],
        [2, '+', 'Davranı', p('M3 13c0-8 4-6 5-4s3 0 5 2', '#333')],
        [2, '+', 'Zaman', p('M3 12l3-5 2 5 3-4 2 3', '#333')],
        [2, '+', 'Euler Bu', p('M6 5l4 3-4 5M4 13h9', '#111', 'none', 2)],
        [2, '', 'Kombin', p('M3 9h3M8 9h2M12 9h2', '#a02828', 'none', 1.8)],
      ]
      const pad = ['pl-[4px]', 'pl-[21px]', 'pl-[38px]']
      const folder = p('M1 13V4l2-2h4l1 2h6v9z', '#b9a648', '#f4ec92') + p('M2 14h13V5', '#555')
      const house = p('M3 3h10v11M3 3v11M3 8h10M3 12h10', '#2a2a6a', '#a9a9d8', 2)
      document.getElementById('tree').innerHTML = rows
        .map(([depth, exp, label, art]) => {
          const box = exp
            ? `<button class="w-[9px] h-[9px] shrink-0 border border-[#999] bg-white"><svg class="block" viewBox="0 0 7 7"><path d="${exp === '+' ? 'M1 3.500h5M3.500 1v5' : 'M1 3.500h5'}" stroke="#111"/></svg></button>`
            : '<span class="w-[9px] shrink-0"></span>'
          return `<li class="flex items-center ${pad[depth]}">${box}${svg(art === 'frame' ? house : folder + art, 'w-[15px] h-[14px] ml-1 mr-[3px] shrink-0')}<span>${label}</span></li>`
        })
        .join('')

      // Coordinate fields
      const field = (id, value, cls = 'bg-white') =>
        `<input id="${id}" type="text" value="${value}" class="min-w-0 h-4 ${cls} border-t border-l border-[#555] border-r border-b border-r-[#ddd] border-b-[#ddd] pl-px font-['Liberation_Sans',sans-serif] text-[9px]" />`
      const axis = (name, value, on) =>
        `<input id="use${name}" type="checkbox" ${on ? 'checked' : ''} class="appearance-none w-[10px] h-[10px] border border-t-[#555] border-l-[#555] border-[#ccc] bg-white checked:bg-[linear-gradient(45deg,transparent_20%,#111_20%,#111_45%,transparent_45%),linear-gradient(135deg,transparent_42%,#111_42%,#111_60%,transparent_60%)] checked:bg-[length:4px_5px,6px_7px] checked:bg-no-repeat checked:bg-[position:0_2px,2px_0]" /><label for="use${name}">${name}</label>` +
        field('val' + name, value, on ? 'bg-white' : 'bg-[#ececec]')
      document.getElementById('coords').innerHTML =
        axis('X', '-64 cm', true) + '<label for="len" class="pl-2">L</label>' + field('len', '130') +
        axis('Y', '-98.4 cm', true) + '<label for="angle" class="pl-2">A</label>' + field('angle', '236.969') +
        axis('Z', '0 cm', false)
    </script>
  </body>
</html>
